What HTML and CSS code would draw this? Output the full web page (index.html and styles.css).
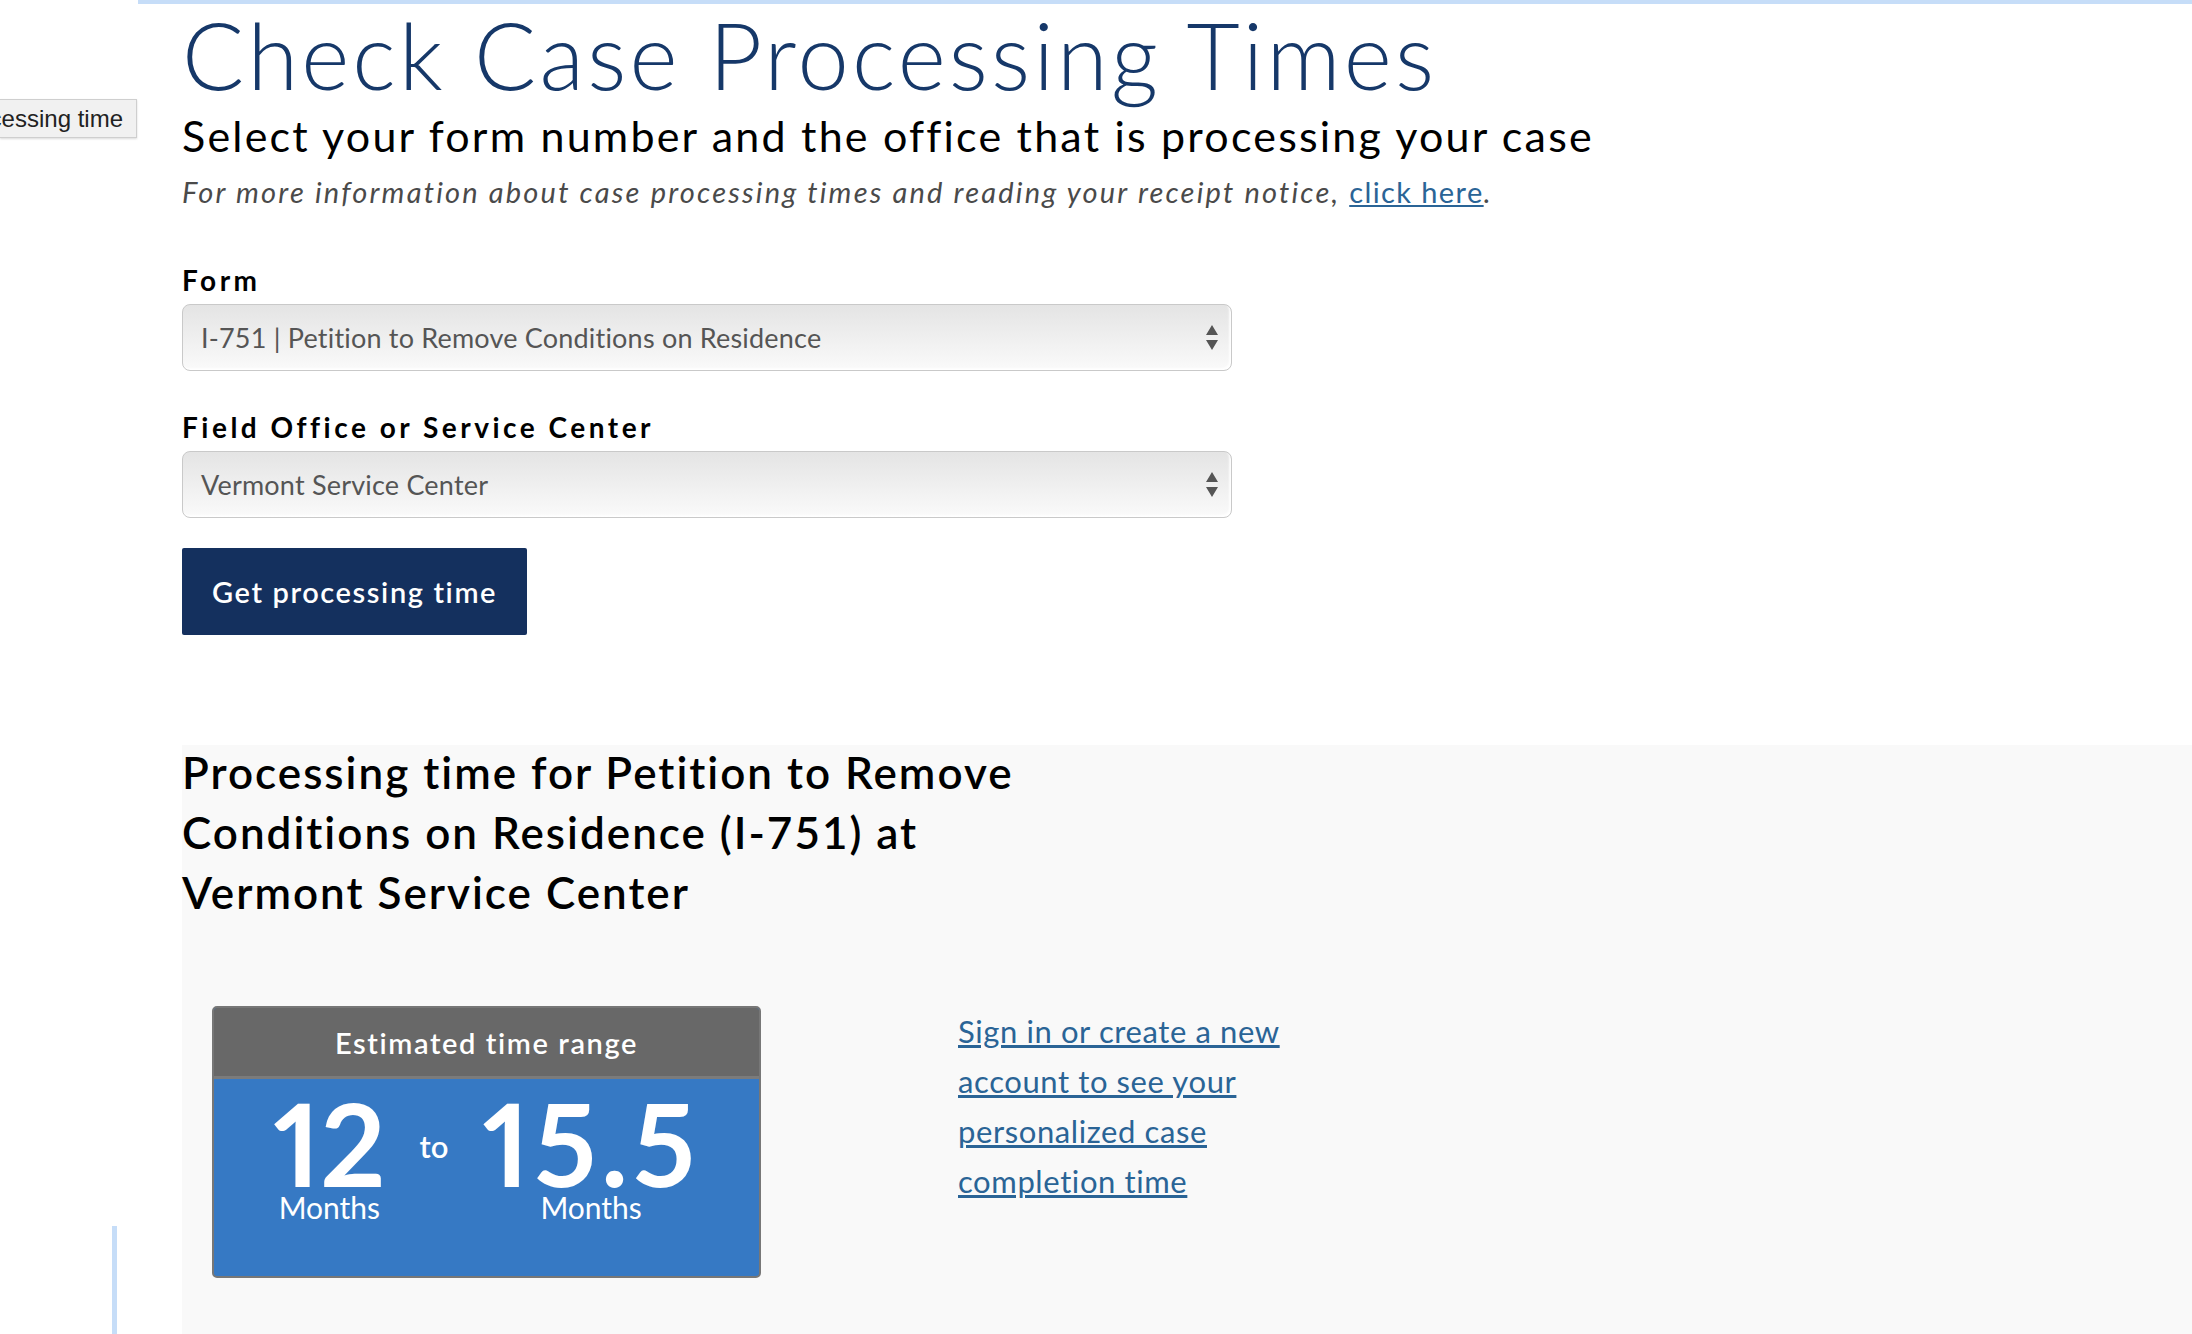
FILE: index.html
```html
<!DOCTYPE html>
<html lang="en">
<head>
<meta charset="utf-8">
<title>Check Case Processing Times</title>
<link rel="stylesheet" href="styles.css">
</head>
<body>
<div class="tooltip"><span class="tooltip-text">Get processing time</span></div>
<div class="page">
  <main class="main">
    <h1 class="title">Check Case Processing Times</h1>
    <h2 class="subtitle">Select your form number and the office that is processing your case</h2>
    <p class="info">For more information about case processing times and reading your receipt notice, <a href="#" class="link">click here</a>.</p>
    <form class="form">
      <label class="label">Form</label>
      <div class="select">
        <span class="select-text">I-751 | Petition to Remove Conditions on Residence</span>
        <svg class="arrows" width="12" height="26" viewBox="0 0 12 26"><path d="M6 0 L12 10 L0 10 Z M0 15 L12 15 L6 25 Z" fill="#555"/></svg>
      </div>
      <label class="label label-2">Field Office or Service Center</label>
      <div class="select">
        <span class="select-text">Vermont Service Center</span>
        <svg class="arrows" width="12" height="26" viewBox="0 0 12 26"><path d="M6 0 L12 10 L0 10 Z M0 15 L12 15 L6 25 Z" fill="#555"/></svg>
      </div>
      <button type="button" class="btn">Get processing time</button>
    </form>
    <section class="result">
      <h3 class="result-title">Processing time for Petition to Remove Conditions on Residence (I-751) at Vermont Service Center</h3>
      <div class="result-body">
        <div class="card">
          <div class="card-head">Estimated time range</div>
          <div class="card-main">
            <div class="num-col"><span class="num">12</span><span class="unit">Months</span></div>
            <span class="to">to</span>
            <div class="num-col"><span class="num num-wide">15.5</span><span class="unit">Months</span></div>
          </div>
        </div>
        <a href="#" class="signin">Sign in or create a new account to see your personalized case completion time</a>
      </div>
    </section>
  </main>
</div>
<div class="vline"></div>
</body>
</html>
```
FILE: styles.css
```css
* { box-sizing: border-box; }
html, body { margin: 0; padding: 0; }
body {
  font-family: Lato, "Open Sans", sans-serif;
  color: #000;
  background: #fff;
  position: relative;
  overflow: hidden;
}
.page { padding-left: 138px; }
.main {
  border-top: 4px solid #c6ddf8;
  padding-left: 44px;
}
.title {
  margin: 5px 0 0;
  font-weight: 300;
  font-size: 92px;
  line-height: 92px;
  letter-spacing: 3.2px;
  color: #163869;
}
.subtitle {
  margin: 10px 0 0;
  font-weight: 400;
  font-size: 43px;
  line-height: 50px;
  letter-spacing: 2.2px;
}
.info {
  margin: 11px 0 0;
  font-style: italic;
  font-size: 29px;
  line-height: 40px;
  letter-spacing: 2.2px;
  color: #4a4a4a;
}
.link { color: #2a6496; text-decoration: underline; font-style: normal; letter-spacing: 1.4px; }
.form { display: flex; flex-direction: column; align-items: flex-start; }
.label {
  margin-top: 48px;
  font-weight: 700;
  font-size: 28px;
  line-height: 40px;
  letter-spacing: 3.5px;
}
.label-2 { margin-top: 36px; }
.select {
  margin-top: 4px;
  width: 1050px;
  height: 67px;
  border: 1px solid #c9c9c9;
  border-radius: 8px;
  background: linear-gradient(#e4e4e4, #fafafa);
  box-shadow: inset -2px -2px 2px rgba(255,255,255,0.9);
  display: flex;
  align-items: center;
  justify-content: space-between;
  padding: 0 13px 0 18px;
}
.select-text { font-size: 27px; color: #555; letter-spacing: 0.2px; }
.btn {
  margin-top: 30px;
  height: 87px;
  padding: 0 30px;
  background: #14305e;
  color: #fff;
  border: none;
  border-radius: 2px;
  font-family: Lato, sans-serif;
  font-weight: 600;
  font-size: 29px;
  letter-spacing: 1.6px;
}
.result {
  display: flow-root;
  margin-top: 110px;
  background: #f9f9f9;
  padding-bottom: 56px;
}
.result-title {
  margin: -3px 0 0;
  max-width: 860px;
  font-weight: 600;
  font-size: 44px;
  line-height: 60px;
  letter-spacing: 2px;
}
.result-body {
  margin-top: 84px;
  padding-left: 30px;
  display: flex;
  align-items: flex-start;
  gap: 197px;
}
.card {
  width: 549px;
  height: 272px;
  border: 2px solid #777;
  border-radius: 5px;
  overflow: hidden;
  background: #3679c4;
  display: flex;
  flex-direction: column;
}
.card-head {
  height: 71px;
  background: #686868;
  border-bottom: 3px solid #7b7b7b;
  color: #fff;
  font-weight: 600;
  font-size: 29px;
  letter-spacing: 1.6px;
  display: flex;
  align-items: center;
  justify-content: center;
}
.card-main {
  display: flex;
  justify-content: center;
  align-items: flex-start;
  gap: 34px;
  padding-top: 19px;
  color: #fff;
}
.num-col { display: flex; flex-direction: column; align-items: center; }
.num {
  font-weight: 700;
  font-size: 114px;
  line-height: 90px;
  font-variant-numeric: proportional-nums;
  letter-spacing: 0;
}
.num-wide { letter-spacing: 4.5px; }
.unit { font-size: 30px; line-height: 36px; margin-top: 1px; }
.to { font-size: 31px; line-height: 34px; padding-top: 31px; font-weight: 600; }
.signin {
  width: 340px;
  font-size: 31px;
  line-height: 50px;
  letter-spacing: 0.6px;
  color: #2a6496;
  text-decoration: underline;
}
.tooltip {
  position: absolute;
  left: 0;
  top: 99px;
  width: 137px;
  height: 39px;
  background: #f1f1f1;
  border: 1px solid #cfcfcf;
  border-left: none;
  box-shadow: 0 1px 2px rgba(0,0,0,0.15);
  overflow: hidden;
  display: flex;
  align-items: center;
  justify-content: flex-end;
  padding-right: 13px;
  white-space: nowrap;
}
.tooltip-text {
  font-family: "Liberation Sans", Arial, sans-serif;
  font-size: 24px;
  color: #222;
}
.vline {
  position: absolute;
  left: 112px;
  top: 1226px;
  width: 5px;
  height: 108px;
  background: #c6ddf8;
}
```
